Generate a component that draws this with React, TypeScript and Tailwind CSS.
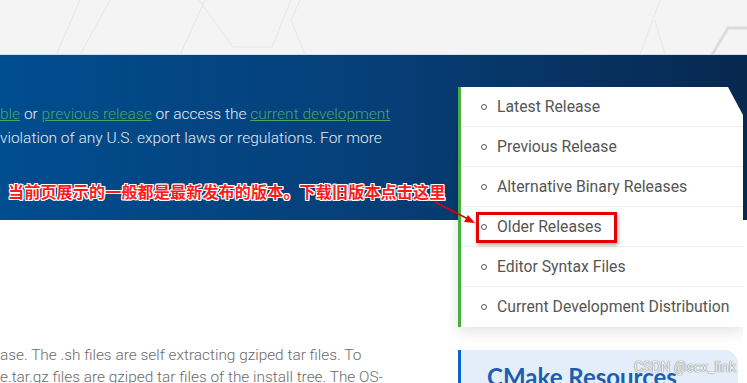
import React from 'react';

const sideLinks = [
  'Latest Release',
  'Previous Release',
  'Alternative Binary Releases',
  'Older Releases',
  'Editor Syntax Files',
  'Current Development Distribution',
];

function HexLines() {
  return (
    <svg className="absolute inset-0" width="747" height="55" viewBox="0 0 747 55" fill="none">
      <g stroke="#e6e6e6" strokeWidth="1">
        <path d="M56 55 L80 0" />
        <path d="M80 55 L110 0" />
        <path d="M180 55 L205 0" />
        <path d="M199 0 L233 47 L272 47 L291 0" />
        <path d="M291 20 L305 55" />
        <path d="M291 20 L300 0" />
        <path d="M640 55 L660 0" />
        <path d="M655 20 L665 55" />
      </g>
      <g stroke="#dcdcdc" strokeWidth="3">
        <path d="M747 28 L728 28 L712 55" />
      </g>
    </svg>
  );
}

export default function App() {
  return (
    <div className="relative w-[747px] h-[383px] overflow-hidden bg-white font-['Roboto','Liberation_Sans',sans-serif]">
      {/* top strip */}
      <div className="relative h-[55px] bg-[#f4f4f4] border-b border-[#cfe3ef]">
        <HexLines />
      </div>

      {/* blue hero band */}
      <div className="h-[165px] bg-gradient-to-r from-[#004d8f] via-[#063f78] to-[#07284f]">
        <div className="w-[458px] overflow-hidden pt-[47px] text-[15.5px] font-light leading-[24px] text-[#e6ebf2] whitespace-nowrap">
          <p>
            <a className="text-[#47a463] underline">ble</a> or{' '}
            <a className="text-[#47a463] underline">previous release</a> or access the{' '}
            <a className="text-[#47a463] underline">current development</a>
          </p>
          <p>violation of any U.S. export laws or regulations. For more</p>
        </div>
        <p className="mt-[29px] pl-[8px] text-[16px] font-bold leading-[24px] tracking-[0.2px] text-[#ff1a1a] whitespace-nowrap font-['Noto_Sans_CJK_SC',sans-serif] [text-shadow:1px_0_0_#fff,-1px_0_0_#fff,0_1px_0_#fff,0_-1px_0_#fff,1px_1px_0_#fff,-1px_-1px_0_#fff,1px_-1px_0_#fff,-1px_1px_0_#fff]">
          当前页展示的一般都是最新发布的版本。下载旧版本点击这里
        </p>
      </div>

      {/* content row */}
      <div className="flex">
        <div className="w-[458px] pt-[124px] text-[15.4px] font-light leading-[22px] text-[#6b6b6b] whitespace-nowrap overflow-hidden">
          <p>ase. The .sh files are self extracting gziped tar files. To</p>
          <p>e.tar.gz files are gziped tar files of the install tree. The OS-</p>
        </div>

        <div className="w-[289px] -mt-[133px]">
          {/* sidebar nav card */}
          <div className="w-[285px] bg-white border-l-[3px] border-[#46b03f] shadow-[0_4px_14px_rgba(0,0,0,0.12)] [clip-path:polygon(0_0,calc(100%-15px)_0,100%_28px,100%_calc(100%+20px),-10px_calc(100%+20px))]">
            <ul>
              {sideLinks.map((label, i) => (
                <li
                  key={label}
                  className={`relative flex items-center h-[40px] pl-[20px] gap-[10px] text-[15.75px] text-[#555] ${
                    i < sideLinks.length - 1 ? 'border-b border-[#eeeeee]' : ''
                  }`}
                >
                  <span className="w-[6px] h-[6px] rounded-full border-[1.5px] border-[#555]" />
                  <span>{label}</span>
                  {label === 'Older Releases' && (
                    <span className="absolute left-[15px] top-[5px] w-[141px] h-[31px] border-[3px] border-[#e60000] shadow-[1px_2px_4px_rgba(0,0,0,0.35)]" />
                  )}
                </li>
              ))}
            </ul>
          </div>

          {/* resources box */}
          <div className="mt-[23px] w-[280px] h-[60px] bg-[#e3eefa] border-l-[3px] border-[#0b62c8] rounded-tr-[14px] pl-[26px] pt-[9px]">
            <h2 className="text-[24px] font-bold text-[#1b5eaf] font-['Lato','Open_Sans',sans-serif]">
              CMake Resources
            </h2>
          </div>
        </div>
      </div>

      {/* annotation arrow */}
      <svg className="absolute left-[430px] top-[196px]" width="50" height="32" viewBox="0 0 50 32" fill="none">
        <path d="M5 6 L40 24" stroke="#e60000" strokeWidth="1.5" />
        <path d="M45 27 L34 26 L38 19 Z" fill="#e60000" />
      </svg>

      {/* watermark */}
      <span className="absolute left-[634px] top-[357px] text-[14px] text-white/90 [text-shadow:0_0_1px_#777,0_0_1px_#777]">
        CSDN @scx_link
      </span>
    </div>
  );
}
